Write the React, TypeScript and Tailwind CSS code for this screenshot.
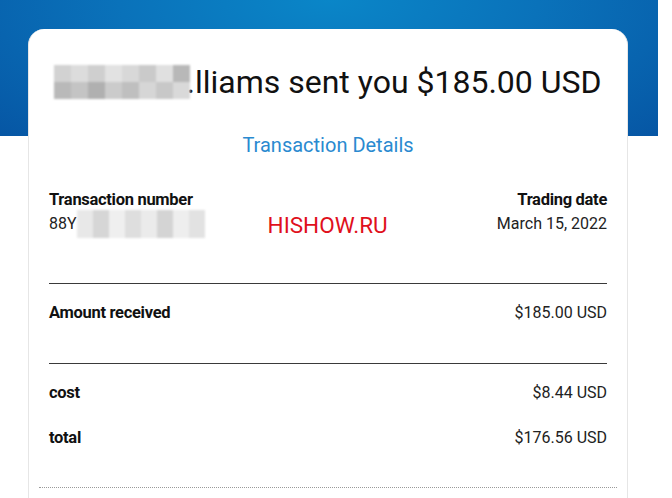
import React from 'react';

const BLUR_NAME = [
  ['#d2d2d2', '#dcdcdc', '#cfcfcf', '#e2e2e2', '#d8d8d8', '#cacaca', '#e0e0e0', '#b8b8b8'],
  ['#b9b9b9', '#c4c4c4', '#b0b0b0', '#cbcbcb', '#bfbfbf', '#d6d6d6', '#c8c8c8', '#d9d9d9'],
];

const BLUR_NUM = ['#e8e8e8', '#d6d6d6', '#efefef', '#dedede', '#ebebeb', '#d4d4d4', '#eeeeee', '#e2e2e2'];

function Row({ label, value }: { label: string; value: string }) {
  return (
    <div className="flex h-[20px] items-center justify-between">
      <span className="text-[16.5px] font-bold tracking-[-0.3px] text-[#111]">{label}</span>
      <span className="text-[16px] text-[#222]">{value}</span>
    </div>
  );
}

export default function App() {
  return (
    <div
      className="h-[498px] w-[672px] overflow-hidden bg-white bg-[radial-gradient(ellipse_at_50%_0%,#0a86c8_0%,#0a72ba_45%,#0656a4_100%)] bg-[length:658px_136px] bg-no-repeat pt-[29px]"
      style={{ fontFamily: 'Roboto, "Liberation Sans", sans-serif' }}
    >
      <div className="ml-[28px] h-[480px] w-[600px] rounded-t-[16px] border-x border-[#e6e6e6] bg-white px-[20px] pt-[33px]">
        {/* headline */}
        <div className="flex h-[40px] items-center justify-center">
          <span className="mr-[-4px] flex flex-col blur-[0.8px]">
            {BLUR_NAME.map((row, i) => (
              <span key={i} className="flex">
                {row.map((c, j) => (
                  <span key={j} className="h-[17px] w-[17px]" style={{ backgroundColor: c }} />
                ))}
              </span>
            ))}
          </span>
          <span className="text-[32px] leading-[40px] text-[#111]">.lliams sent you $185.00 USD</span>
        </div>

        <div className="mt-[31px] h-[24px] text-center text-[20px] leading-[24px] text-[#2a8ad0]">Transaction Details</div>

        {/* number / date */}
        <div className="mt-[33px] flex justify-between">
          <div>
            <div className="h-[20px] text-[16.5px] font-bold leading-[20px] tracking-[-0.3px] text-[#111]">Transaction number</div>
            <div className="mt-[4px] flex h-[20px] items-center text-[16px] text-[#222]">
              88Y
              <span className="flex blur-[1.2px]">
                {BLUR_NUM.map((c, i) => (
                  <span key={i} className="h-[28px] w-[16px]" style={{ backgroundColor: c }} />
                ))}
              </span>
              <span className="ml-[63px] mt-[2px] text-[22.5px] leading-none text-[#e0101c]">HISHOW.RU</span>
            </div>
          </div>
          <div className="text-right">
            <div className="h-[20px] text-[16.5px] font-bold leading-[20px] tracking-[-0.3px] text-[#111]">Trading date</div>
            <div className="mt-[4px] h-[20px] text-[16px] leading-[20px] text-[#222]">March 15, 2022</div>
          </div>
        </div>

        <div className="mt-[49px] border-t border-[#3a3a3a]" />
        <div className="pb-[40px] pt-[19px]">
          <Row label="Amount received" value="$185.00 USD" />
        </div>
        <div className="border-t border-[#3a3a3a]" />

        <div className="mt-[19px] flex flex-col gap-[25px]">
          <Row label="cost" value="$8.44 USD" />
          <Row label="total" value="$176.56 USD" />
        </div>

        <div className="mx-[-10px] mt-[39px] border-t border-dotted border-[#9a9a9a]" />
      </div>
    </div>
  );
}
